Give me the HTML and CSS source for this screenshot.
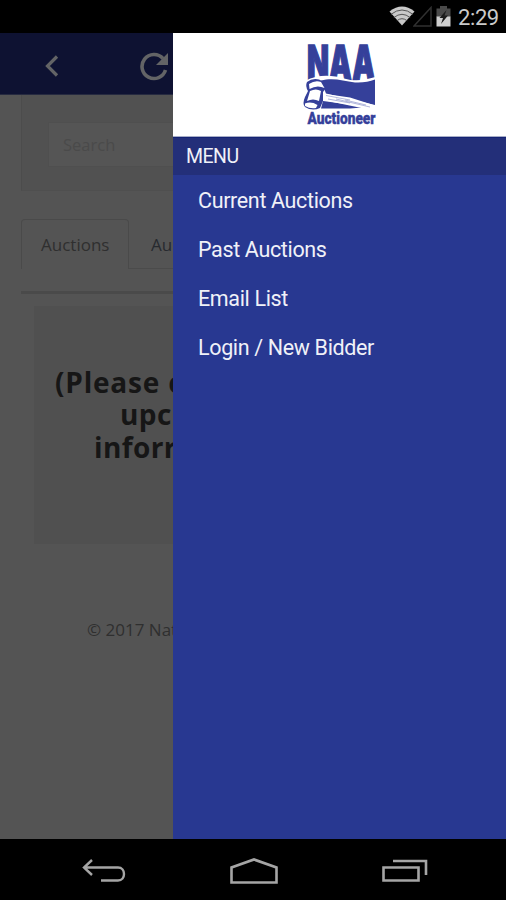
FILE: index.html
```
<!DOCTYPE html>
<html lang="en">
<head>
  <meta charset="UTF-8">
  <meta name="viewport" content="width=device-width, initial-scale=1.0">
  <title>NAA Auctioneer</title>
  <link rel="stylesheet" href="styles.css">
</head>
<body>
  <div class="status-bar">
    <svg class="wifi" width="26" height="20" viewBox="0 0 26 20">
      <path d="M0.5 5.5Q13 -4.5 25.5 5.5L13 19.5Z" fill="#c8c8c8"/>
      <path d="M2 8.3Q13 -0.3 24 8.3M4.8 11.6Q13 5 21.2 11.6M7.8 14.8Q13 10.6 18.2 14.8" fill="none" stroke="#555" stroke-width="1"/>
    </svg>
    <svg class="signal" width="19" height="21" viewBox="0 0 19 21">
      <path d="M1 20L18 1.5V20Z" fill="none" stroke="#303030" stroke-width="1.5"/>
    </svg>
    <svg class="battery" width="15" height="21" viewBox="0 0 15 21">
      <path d="M4 0H11V2.5H14.5V11H0.5V2.5H4Z" fill="#4a4a4a"/>
      <path d="M0.5 10.5H14.5V20.5H0.5Z" fill="#cfcfcf"/>
      <path d="M10.5 4L3.5 12H7L5 18L12 9.5H8.5Z" fill="#1c1c1c"/>
    </svg>
    <span class="clock">2:29</span>
  </div>

  <div class="screen">
    <div class="page">
      <div class="toolbar">
        <svg class="back" width="14" height="22" viewBox="0 0 14 22">
          <path d="M12 1.5L2.5 11L12 20.5" fill="none" stroke="#636466" stroke-width="3.2"/>
        </svg>
        <svg class="reload" width="29" height="30" viewBox="0 0 29 30">
          <path d="M23 6.5A12 12 0 1 0 25.5 18" fill="none" stroke="#636466" stroke-width="3.6"/>
          <path d="M28 1V13H16Z" fill="#636466"/>
        </svg>
      </div>
      <div class="search-panel">
        <div class="search-input">Search</div>
      </div>
      <div class="tabs">
        <div class="tab active">Auctions</div>
        <div class="tab">Au</div>
      </div>
      <div class="notice">
        <p class="line1">(Please c</p>
        <p class="line2">upc</p>
        <p class="line3">inforr</p>
      </div>
      <p class="copyright">© 2017 Nat</p>
    </div>

    <div class="drawer">
      <div class="logo">
        <svg width="100" height="104" viewBox="0 0 100 104">
          <g fill="#35409a">
            <text class="logo-naa" transform="translate(17 46) scale(.66 1.26)" textLength="103" lengthAdjust="spacingAndGlyphs">NAA</text>
            <!-- banner behind the gavel -->
            <path d="M15 47C28 40 42 41 54 44.500C66 48 75 46 87 42.500V74L15 77Z" fill="#fff"/>
            <path d="M31 46.500C44 43.500 53 47 65 48.500C73 49 79 47.500 85 45.500V71L36 59.500Z"/>
            <path d="M33 67L78 73L60 74.500H31Z"/>
            <path d="M32 59.500L60 63.500L85 71.500L86 73.500L74 74.500L33 66Z" fill="#fff"/>
            <path d="M36 61.500L60 66M46 65L80 73M38 65L60 69M55 66L76 71" stroke="#8f96cb" stroke-width=".7"/>
            <!-- gavel head -->
            <path d="M17 48Q22 44 29 45.500Q36 48 36 54L33 58V67L30 74Q22 77.500 15 73Q12 70 15 63L18 57Q15 52 17 48Z"/>
            <path d="M19 50Q25 46 31 48L34.500 54Q27 50.500 19.500 55Z" fill="#fff"/>
            <path d="M20 57Q26 54 31 57L29 67Q23 64 17 67Z" fill="#fff"/>
            <path d="M15 69.500Q21 67 27.500 71L26 74Q20 75 15 72Z" fill="#fff"/>
            <text class="logo-name" transform="translate(17.500 89.800) scale(.8 1)" textLength="85" lengthAdjust="spacingAndGlyphs">Auctioneer</text>
          </g>
        </svg>
      </div>
      <div class="menu-title">MENU</div>
      <ul class="menu">
        <li>Current Auctions</li>
        <li>Past Auctions</li>
        <li>Email List</li>
        <li>Login / New Bidder</li>
      </ul>
    </div>
  </div>

  <div class="nav-bar">
    <svg width="44" height="26" viewBox="0 0 44 26">
      <path d="M10 2L2 9.500L10 17M2 9.500H36C44 9.500 44 22.500 36 22.500H19" fill="none" stroke="#a5a5a5" stroke-width="2.400"/>
    </svg>
    <svg width="50" height="28" viewBox="0 0 50 28">
      <path d="M2.500 24.500V9.500L25 1.500L47.500 9.500V24.500Z" fill="none" stroke="#a5a5a5" stroke-width="2.600"/>
    </svg>
    <svg width="46" height="26" viewBox="0 0 46 26">
      <path d="M1.500 9.500H36.500V22.500H1.500Z" fill="none" stroke="#a5a5a5" stroke-width="2.600"/>
      <path d="M11 3H44V17" fill="none" stroke="#a5a5a5" stroke-width="2.600"/>
    </svg>
  </div>
</body>
</html>
```
FILE: styles.css
```
* {
  box-sizing: border-box;
}

body {
  margin: 0;
  width: 506px;
  height: 900px;
  display: flex;
  flex-direction: column;
  background: #000;
  font-family: Roboto, sans-serif;
  overflow: hidden;
}

svg {
  display: block;
  flex: none;
}

p {
  margin: 0;
}

.status-bar {
  height: 33px;
  display: flex;
  justify-content: flex-end;
  padding: 6px 7px 0 0;
}

.signal {
  margin: 0 4px 0 -2px;
}

.battery {
  margin-right: 7px;
}

.clock {
  width: 41px;
  font-size: 22px;
  line-height: 23px;
  color: #cacaca;
  letter-spacing: -0.4px;
}

.screen {
  height: 806px;
  display: flex;
}

/* page under the drawer, already dimmed */
.page {
  width: 173px;
  background: #545454;
  overflow: hidden;
  white-space: nowrap;
  font-family: "Open Sans", sans-serif;
}

.toolbar {
  height: 62px;
  background: #0e1232;
  border-bottom: 1px solid #262a40;
  display: flex;
  padding: 18px 0 0 45px;
}

.back {
  margin-top: 4px;
}

.reload {
  margin: 1px 0 0 81px;
}

.search-panel {
  height: 96px;
  margin-left: 21px;
  padding: 27px 0 0 26px;
  background: #515151;
  border-left: 1px solid #4c4c4c;
  border-bottom: 1px solid #4f4f4f;
}

.search-input {
  height: 45px;
  padding-left: 14px;
  background: #555;
  border: 1px solid #4f4f4f;
  border-right: none;
  font-size: 16.5px;
  line-height: 43px;
  color: #4a4a4a;
}

.tabs {
  height: 75px;
  margin: 28px 0 0 21px;
  display: flex;
  border-bottom: 3px solid #4a4a4a;
}

.tab {
  height: 50px;
  width: 107px;
  padding-left: 22px;
  border-bottom: 1px solid #4b4b4b;
  font-size: 17px;
  line-height: 51px;
  color: #272a2f;
  flex: none;
}

.tab.active {
  width: 108px;
  padding-left: 19px;
  border: 1px solid #4a4a4a;
  border-bottom: none;
  border-radius: 4px 4px 0 0;
  line-height: 49px;
  color: #2f2f2f;
}

.notice {
  height: 238px;
  margin: 12px 0 0 34px;
  padding-top: 60px;
  background: #505050;
  font-size: 28px;
  font-weight: 700;
  line-height: 32.3px;
  letter-spacing: 0.4px;
  color: #161616;
}

.line1 {
  padding-left: 21px;
  letter-spacing: 0.8px;
}

.line2 {
  padding-left: 86px;
}

.line3 {
  padding-left: 60px;
}

.copyright {
  margin: 74px 0 0 87px;
  font-size: 17px;
  line-height: 24px;
  color: #2f2f2f;
}

.drawer {
  width: 333px;
  background: #283891;
}

.logo {
  height: 104px;
  padding: 1px 0 0 117px;
  background: #fff;
  border-bottom: 1px solid #a8aec8;
}

.logo-naa {
  font: 900 38px Inter, sans-serif;
  stroke: #35409a;
  stroke-width: 1.2px;
}

.logo-name {
  font: 900 16px Roboto, sans-serif;
  stroke: #35409a;
  stroke-width: 0.4px;
}

.menu-title {
  height: 38px;
  padding-left: 13px;
  background: #232f79;
  border-top: 1px solid #142373;
  color: #f0f1f8;
  font-size: 19.5px;
  line-height: 37px;
  letter-spacing: -0.5px;
}

.menu {
  list-style: none;
  margin: 0;
  padding: 1px 0 0 25px;
}

.menu li {
  height: 48.9px;
  color: #f0f1f8;
  font-size: 21.5px;
  line-height: 49px;
  letter-spacing: -0.35px;
}

.nav-bar {
  height: 61px;
  display: flex;
  justify-content: space-between;
  align-items: flex-start;
  padding: 19px 78px 0 82px;
}
```
